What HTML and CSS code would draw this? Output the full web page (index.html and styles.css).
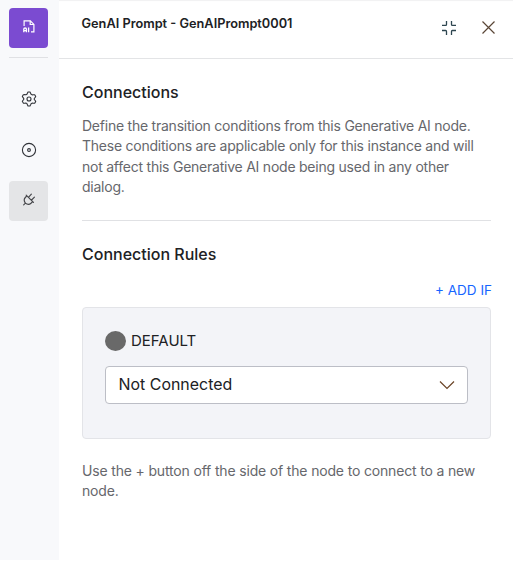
FILE: index.html
```html
<!DOCTYPE html>
<html lang="en">
<head>
<meta charset="utf-8">
<title>GenAI Prompt</title>
<link rel="stylesheet" href="styles.css">
</head>
<body>
<div class="panel">
  <nav class="rail">
    <div class="tile tile-brand">
      <svg width="12" height="13" viewBox="0 0 12 13" fill="none" stroke="#fff" stroke-width="1.2"><path d="M1.100 6V.800h6.200l3.600 3.600v7.500H8"/><path d="M7.200.800v3.700h3.700"/><path d="M.8 12.300V9q0-1 1.300-1t1.300 1v3.300M.8 10.600h2.600M5.600 7.500v4.800" stroke-width="1.300"/></svg>
    </div>
    <div class="rail-line"></div>
    <div class="tile tile-gear">
      <svg width="16" height="16" viewBox="0 0 16 16" fill="none" stroke="#303338" stroke-width="1.1" stroke-linejoin="round"><path d="M6.4 2.2 7 1h2l.6 1.2.5 1.1 1 .6 1.2-.2 1.4.1 1 1.8-.8 1.1-.7 1v.6l.7 1 .8 1.1-1 1.8-1.4.1-1.2-.2-1 .6-.5 1.1L9 15H7l-.6-1.3-.5-1.1-1-.6-1.2.2-1.4-.1-1-1.8.8-1.1.7-1v-.6l-.7-1-.8-1.1 1-1.8 1.4-.1 1.200.2 1-.6z"/><circle cx="8" cy="8" r="2"/></svg>
    </div>
    <div class="tile tile-target">
      <svg width="16" height="16" viewBox="0 0 16 16" fill="none" stroke="#303338" stroke-width="1.1"><circle cx="8" cy="8" r="6.600"/><circle cx="8" cy="8" r="1.400"/></svg>
    </div>
    <div class="tile tile-active">
      <svg width="12" height="13" viewBox="0.500 1 12.500 12.500" fill="none" stroke="#45464a" stroke-width="1.2" stroke-linecap="round" stroke-linejoin="round"><path d="M1.200 12.800 3 11M3 11C1.500 9 1.700 6.300 3.100 4.900l1.500-1.500 6 6-1.500 1.500C7.500 12.400 4.900 12.600 3 11M3.800 2.600l7.600 7.600M6.200 5 9.200 1.700M9.200 8l3.200-3.200"/></svg>
    </div>
  </nav>
  <main class="main">
    <header class="header">
      <h1 class="title">GenAI Prompt - GenAIPrompt0001</h1>
      <div class="actions">
        <svg width="14" height="14" viewBox="0 0 14 14" fill="none" stroke="#2d4650" stroke-width="1.300"><path d="M0 4.400h3.600q.9 0 .9-.9V0M9.500 0v3.500q0 .9.9.9H14M0 9.500h3.600q.9 0 .9.900V14M14 9.500h-3.600q-.9 0-.9.900V14"/></svg>
        <svg width="13" height="13" viewBox="0 0 13 13" fill="none" stroke="#5a4636" stroke-width="1.200"><path d="M.5.500l12 12M12.500.500l-12 12"/></svg>
      </div>
    </header>
    <section class="content">
      <h2 class="heading">Connections</h2>
      <p class="text">Define the transition conditions from this Generative AI node.<br>These conditions are applicable only for this instance and will<br>not affect this Generative AI node being used in any other<br>dialog.</p>
      <hr class="divider">
      <h2 class="heading">Connection Rules</h2>
      <div class="add"><span class="add-label">+ ADD IF</span></div>
      <div class="card">
        <div class="rule"><span class="dot"></span><span class="rule-name">DEFAULT</span></div>
        <div class="select">
          <span class="select-value">Not Connected</span>
          <svg width="16" height="10" viewBox="0 0 16 10" fill="none" stroke="#6b4426" stroke-width="1.200"><path d="m1 1.500 7 7 7-7"/></svg>
        </div>
      </div>
      <p class="text note">Use the + button off the side of the node to connect to a new<br>node.</p>
    </section>
  </main>
</div>
</body>
</html>
```
FILE: styles.css
```css
* { box-sizing: border-box; }
body { margin: 0; background: #fff; font-family: Inter, "Liberation Sans", sans-serif; color: #202124; }
h1, h2, p { margin: 0; white-space: nowrap; }
svg { display: block; }
.panel { display: flex; width: 513px; height: 560px; box-shadow: inset 0 2px 1px -1px #f1f1f2; }
.rail { width: 59px; padding: 8px 11px 0 9px; background: #f8f9fb; }
.tile { display: flex; align-items: center; justify-content: center; width: 39px; height: 40px; border-radius: 4px; }
.tile-brand { background: #7b4bd1; padding: 0 0 3px; }
.rail-line { height: 1px; margin-top: 9px; background: #e0e1e4; }
.tile-gear { margin-top: 21px; }
.tile-target { margin-top: 11px; }
.tile-active { margin-top: 11px; background: #e4e5e7; padding-bottom: 3px; }
.main { flex: 1; }
.header { display: flex; justify-content: space-between; height: 59px; padding: 0 18px 0 22.500px; border-bottom: 1px solid #e3e4e6; }
.title { margin-top: 14px; font-size: 12.750px; line-height: 20px; font-weight: 600; }
.actions { display: flex; gap: 26px; padding-top: 21px; }
.content { padding: 22px 22px 0 23px; }
.heading { font-size: 16px; line-height: 22px; font-weight: 500; }
.text { margin-top: 13px; font-size: 14px; line-height: 20.400px; letter-spacing: -0.235px; color: #66676c; }
.divider { height: 1px; margin: 22px 0; border: 0; background: #e0e1e4; }
.add { display: flex; justify-content: flex-end; margin-top: 15px; font-size: 13.500px; line-height: 21px; color: #1565ff; }
.add-label { margin-right: -1px; }
.card { height: 132px; margin-top: 6px; padding: 23px 22px; border: 1px solid #e3e4e8; border-radius: 4px; background: #f3f4f8; }
.rule { display: flex; align-items: center; gap: 5px; height: 21px; font-size: 15px; }
.rule-name { padding-bottom: 2px; }
.dot { width: 21px; height: 20px; border-radius: 50%; background: #696969; }
.select { display: flex; align-items: center; justify-content: space-between; height: 38px; margin-top: 14px; padding: 0 12px 0 12.500px; border: 1px solid #bcbec6; border-radius: 4px; background: #fff; font-size: 15.950px; }
.select-value { padding-bottom: 1px; }
.note { margin-top: 22px; letter-spacing: -0.165px; }
```
